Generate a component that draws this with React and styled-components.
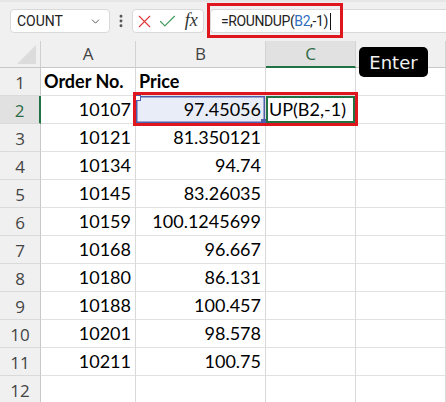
import React from "react";
import styled, { createGlobalStyle, css } from "styled-components";
import { ChevronDown, EllipsisVertical, X, Check } from "lucide-react";

const GlobalStyle = createGlobalStyle`
  html, body {
    margin: 0;
    padding: 0;
    background: #fff;
    overflow: hidden;
  }
  * { box-sizing: border-box; }
`;

const Page = styled.div`
  position: relative;
  width: 446px;
  height: 402px;
  overflow: hidden;
`;

const Toolbar = styled.div`
  position: relative;
  display: flex;
  align-items: flex-start;
  height: 41px;
  padding: 9px 0 0 10px;
  background: #f0f0f0;
  border-top: 2px solid #e6e6e6;
`;

const NameBox = styled.div`
  display: flex;
  align-items: center;
  justify-content: space-between;
  width: 100px;
  height: 24px;
  margin-top: -2px;
  padding: 0 7px 0 6px;
  background: #fff;
  border: 1px solid #d9d9d9;
  border-radius: 4px;
  font-family: Roboto, "Liberation Sans", sans-serif;
  font-size: 14px;
  color: #222;
`;

const DotsSlot = styled.div`
  display: flex;
  align-items: center;
  justify-content: center;
  width: 22px;
  height: 24px;
  margin-top: -2px;
  color: #555;
`;

const FxGroup = styled.div`
  display: flex;
  align-items: center;
  width: 72px;
  height: 24px;
  margin-top: -2px;
  background: #fff;
  border: 1px solid #d9d9d9;
  border-radius: 4px;
`;

const FxButton = styled.span`
  display: flex;
  align-items: center;
  justify-content: center;
  width: 24px;
  height: 22px;
  color: ${(p) => p.$color || "#333"};
`;

const FxLabel = styled.span`
  font-family: "Liberation Serif", serif;
  font-style: italic;
  font-size: 18px;
  color: #333;
  margin-top: -2px;
`;

const FormulaField = styled.div`
  display: flex;
  align-items: center;
  flex: 1;
  height: 24px;
  margin: -2px 0 0 6px;
  padding-left: 10px;
  background: #fff;
  border: 1px solid #d9d9d9;
  border-right: none;
  border-radius: 4px 0 0 4px;
  font-family: Roboto, "Liberation Sans", sans-serif;
  font-size: 14px;
  letter-spacing: -0.4px;
  color: #222;
`;

const RefText = styled.span`
  color: #2f6fc0;
`;

const Caret = styled.span`
  display: inline-block;
  width: 1px;
  height: 17px;
  margin-left: 2px;
  background: #111;
`;

const FormulaCallout = styled.div`
  position: absolute;
  left: 207px;
  top: 1px;
  width: 136px;
  height: 35px;
  border: 3px solid #e0161e;
`;

const Sheet = styled.div`
  position: relative;
  display: grid;
  grid-template-columns: 41px 95px 130px 90px 1fr;
  grid-template-rows: 27px repeat(12, 28px);
`;

const Corner = styled.div`
  position: relative;
  background: #f0f0f0;
  border-right: 1px solid #d0d0d0;
  border-bottom: 1px solid #c8c8c8;

  &::after {
    content: "";
    position: absolute;
    right: 4px;
    bottom: 3px;
    width: 19px;
    height: 19px;
    background: #dcdcdc;
    clip-path: polygon(100% 0, 100% 100%, 0 100%);
  }
`;

const ColHeader = styled.div`
  display: flex;
  align-items: center;
  justify-content: center;
  padding-bottom: 1px;
  background: ${(p) => (p.$active ? "#e1e1e1" : "#f0f0f0")};
  border-right: 1px solid #d3d3d3;
  border-bottom: ${(p) => (p.$active ? "2px solid #217346" : "1px solid #c8c8c8")};
  font-family: "Open Sans", sans-serif;
  font-size: 17px;
  color: ${(p) => (p.$active ? "#2e6b47" : "#444")};
`;

const RowHeader = styled.div`
  display: flex;
  align-items: center;
  justify-content: center;
  padding-top: 2px;
  background: ${(p) => (p.$active ? "#e1e1e1" : "#f0f0f0")};
  border-right: ${(p) => (p.$active ? "2px solid #217346" : "1px solid #c8c8c8")};
  border-bottom: 1px solid #dadada;
  font-family: "Open Sans", sans-serif;
  font-size: 17px;
  color: ${(p) => (p.$active ? "#2e6b47" : "#444")};
`;

const Cell = styled.div`
  position: relative;
  display: flex;
  align-items: flex-end;
  justify-content: ${(p) => (p.$align === "right" ? "flex-end" : "flex-start")};
  padding: 0 ${(p) => (p.$align === "right" ? "4px" : "3px")} 2px;
  background: #fff;
  border-right: 1px solid #d9d9d9;
  border-bottom: 1px solid #e1e1e1;
  font-family: Lato, "Liberation Sans", sans-serif;
  font-size: 18px;
  line-height: 1.2;
  font-weight: ${(p) => (p.$bold ? 700 : 400)};
  color: #000;
  white-space: nowrap;

  ${(p) =>
    p.$range &&
    css`
      background: #e8edf7;
      box-shadow: inset 0 0 0 1.5px #4e5fa9;

      &::before,
      &::after {
        content: "";
        position: absolute;
        width: 4px;
        height: 4px;
        background: #fff;
        border: 1px solid #4e5fa9;
      }
      &::before {
        left: -1px;
        top: -1px;
      }
      &::after {
        right: -2px;
        bottom: -2px;
        background: #4e5fa9;
      }
    `}

  ${(p) =>
    p.$active &&
    css`
      box-shadow: inset 0 0 0 2px #217346;
    `}
`;

const RangeCallout = styled.div`
  position: absolute;
  left: 133px;
  top: 51px;
  width: 225px;
  height: 34px;
  border: 3px solid #e0161e;
  pointer-events: none;
`;

const KeyTip = styled.div`
  position: absolute;
  left: 359px;
  top: 47px;
  display: flex;
  align-items: center;
  justify-content: center;
  width: 69px;
  height: 30px;
  background: #000;
  border-radius: 5px;
  font-family: "DejaVu Sans", sans-serif;
  font-size: 18px;
  color: #f2f2f2;
`;

const rows = [
  ["Order No.", "Price"],
  ["10107", "97.45056"],
  ["10121", "81.350121"],
  ["10134", "94.74"],
  ["10145", "83.26035"],
  ["10159", "100.1245699"],
  ["10168", "96.667"],
  ["10180", "86.131"],
  ["10188", "100.457"],
  ["10201", "98.578"],
  ["10211", "100.75"],
  ["", ""],
];

export default function App() {
  return (
    <Page>
      <GlobalStyle />
      <Toolbar>
        <NameBox>
          COUNT
          <ChevronDown size={13} strokeWidth={1.6} color="#444" />
        </NameBox>
        <DotsSlot>
          <EllipsisVertical size={16} strokeWidth={2.4} />
        </DotsSlot>
        <FxGroup>
          <FxButton $color="#e0363c">
            <X size={21} strokeWidth={1.3} />
          </FxButton>
          <FxButton $color="#3e9a5a">
            <Check size={21} strokeWidth={1.3} />
          </FxButton>
          <FxButton>
            <FxLabel>fx</FxLabel>
          </FxButton>
        </FxGroup>
        <FormulaField>
          =ROUNDUP(<RefText>B2</RefText>,-1)
          <Caret />
        </FormulaField>
        <FormulaCallout />
      </Toolbar>

      <Sheet>
        <Corner />
        <ColHeader>A</ColHeader>
        <ColHeader>B</ColHeader>
        <ColHeader $active>C</ColHeader>
        <ColHeader />
        {rows.map(([order, price], i) => {
          const n = i + 1;
          const header = n === 1;
          return (
            <React.Fragment key={n}>
              <RowHeader $active={n === 2}>{n}</RowHeader>
              <Cell $align={header ? "left" : "right"} $bold={header}>
                {order}
              </Cell>
              <Cell $align={header ? "left" : "right"} $bold={header} $range={n === 2}>
                {price}
              </Cell>
              <Cell $active={n === 2}>{n === 2 ? "UP(B2,-1)" : ""}</Cell>
              <Cell />
            </React.Fragment>
          );
        })}
        <RangeCallout />
      </Sheet>
      <KeyTip>Enter</KeyTip>
    </Page>
  );
}
